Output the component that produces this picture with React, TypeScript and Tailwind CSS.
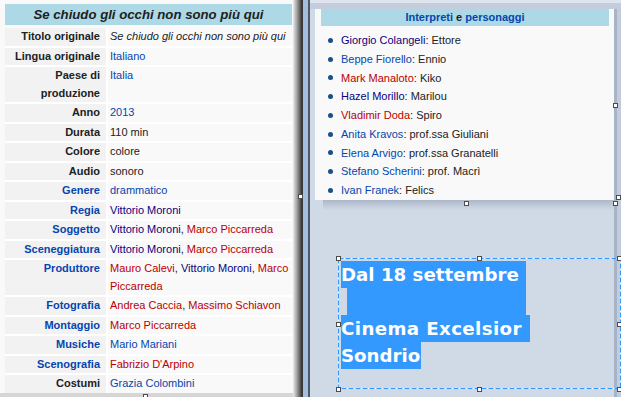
type Tone = "k" | "b" | "v" | "r";

type Part = { t: string; c?: Tone; i?: boolean };

type Row = { label: string[]; link?: boolean; lines: Part[][] };

const toneClass: Record<Tone, string> = {
  k: "text-[#202122]",
  b: "text-[#0645ad]",
  v: "text-[#0b0080]",
  r: "text-[#ba0000]",
};

const VM: Part = { t: "Vittorio Moroni", c: "v" };
const MP: Part = { t: "Marco Piccarreda", c: "r" };
const comma: Part = { t: ", " };

const rows: Row[] = [
  { label: ["Titolo originale"], lines: [[{ t: "Se chiudo gli occhi non sono più qui", i: true }]] },
  { label: ["Lingua originale"], lines: [[{ t: "Italiano", c: "b" }]] },
  { label: ["Paese di", "produzione"], lines: [[{ t: "Italia", c: "b" }]] },
  { label: ["Anno"], lines: [[{ t: "2013", c: "b" }]] },
  { label: ["Durata"], lines: [[{ t: "110 min" }]] },
  { label: ["Colore"], lines: [[{ t: "colore" }]] },
  { label: ["Audio"], lines: [[{ t: "sonoro" }]] },
  { label: ["Genere"], link: true, lines: [[{ t: "drammatico", c: "b" }]] },
  { label: ["Regia"], link: true, lines: [[VM]] },
  { label: ["Soggetto"], link: true, lines: [[VM, comma, MP]] },
  { label: ["Sceneggiatura"], link: true, lines: [[VM, comma, MP]] },
  {
    label: ["Produttore"],
    link: true,
    lines: [
      [{ t: "Mauro Calevi", c: "r" }, comma, VM, comma, { t: "Marco", c: "r" }],
      [{ t: "Piccarreda", c: "r" }],
    ],
  },
  { label: ["Fotografia"], link: true, lines: [[{ t: "Andrea Caccia", c: "r" }, comma, { t: "Massimo Schiavon", c: "r" }]] },
  { label: ["Montaggio"], link: true, lines: [[MP]] },
  { label: ["Musiche"], link: true, lines: [[{ t: "Mario Mariani", c: "b" }]] },
  { label: ["Scenografia"], link: true, lines: [[{ t: "Fabrizio D'Arpino", c: "r" }]] },
  { label: ["Costumi"], lines: [[{ t: "Grazia Colombini", c: "b" }]] },
];

const cast: { name: string; c: Tone; role: string }[] = [
  { name: "Giorgio Colangeli", c: "v", role: "Ettore" },
  { name: "Beppe Fiorello", c: "b", role: "Ennio" },
  { name: "Mark Manaloto", c: "r", role: "Kiko" },
  { name: "Hazel Morillo", c: "v", role: "Marilou" },
  { name: "Vladimir Doda", c: "r", role: "Spiro" },
  { name: "Anita Kravos", c: "b", role: "prof.ssa Giuliani" },
  { name: "Elena Arvigo", c: "b", role: "prof.ssa Granatelli" },
  { name: "Stefano Scherini", c: "b", role: "prof. Macrì" },
  { name: "Ivan Franek", c: "b", role: "Felics" },
];

function Parts({ parts }: { parts: Part[] }) {
  return (
    <>
      {parts.map((p, i) => (
        <span key={i} className={`${toneClass[p.c ?? "k"]} ${p.i ? "italic" : ""}`}>
          {p.t}
        </span>
      ))}
    </>
  );
}

function InfoboxPane() {
  return (
    <div className="flex w-[293px] shrink-0 flex-col">
      <div className="h-[393px] bg-[#f9f9f9] pl-[5px] pt-[4px]">
        <div className="flex h-[21px] w-[287px] items-center justify-center bg-[#add8e6] text-[13.2px] font-bold italic">
          Se chiudo gli occhi non sono più qui
        </div>
        <div className="mt-[3px] grid w-[287px] grid-cols-[101px_184px] gap-[2px] bg-white leading-[17.5px]">
          {rows.map((row) => (
            <div key={row.label.join(" ")} className="contents">
              <div
                className={`bg-[#f2f2f2] pr-[6px] text-right font-bold ${row.link ? "text-[#0645ad]" : "text-[#202122]"}`}
              >
                {row.label.map((l) => (
                  <div key={l}>{l}</div>
                ))}
              </div>
              <div className="bg-[#f9f9f9] pl-[2px]">
                {row.lines.map((line, i) => (
                  <div key={i}>
                    <Parts parts={line} />
                  </div>
                ))}
              </div>
            </div>
          ))}
        </div>
      </div>
      <div className="h-[4px] bg-[#d6d6d6]" />
    </div>
  );
}

function Divider() {
  return (
    <div className="flex shrink-0">
      <div className="w-[8px] bg-gradient-to-r from-[#ececec] via-[#a0a0a0] to-[#4c4c4c]" />
      <div className="w-[2px] bg-[#3a3a3a]" />
      <div className="w-[5px] bg-[#a4bfdd]" />
      <div className="w-[2px] bg-[#4f5868]" />
    </div>
  );
}

function Handle({ className }: { className: string }) {
  return <div className={`absolute h-[5px] w-[5px] border border-[#4c4c4c] bg-white ${className}`} />;
}

function TextBox() {
  return (
    <div className="relative ml-[28px] mt-[48px] h-[131px] w-[283px]">
      <svg className="absolute inset-0" width="283" height="131">
        <rect x="0.5" y="0.5" width="282" height="130" fill="none" stroke="#ffffff" />
        <rect x="0.5" y="0.5" width="282" height="130" fill="none" stroke="#3399ff" strokeDasharray="5 2" />
      </svg>
      <div className="relative pl-[3px] pt-[3px] font-['DejaVu_Sans',Verdana,sans-serif] text-[18.2px] font-bold leading-[27px] text-white">
        <div className="w-fit bg-[#3399ff] pr-[1px]">Dal 18 settembre&nbsp;</div>
        <div className="ml-[6px] h-[27px] w-[179px] bg-[#3399ff]" />
        <div className="w-fit bg-[#3399ff] pr-[1px] tracking-[0.4px]">Cinema Excelsior&nbsp;</div>
        <div className="w-fit bg-[#3399ff] pr-[1px]">Sondrio</div>
      </div>
      <Handle className="-left-[2px] -top-[2px]" />
      <Handle className="left-[139px] -top-[2px]" />
      <Handle className="left-[279px] -top-[2px]" />
      <Handle className="-left-[2px] top-[64px]" />
      <Handle className="left-[279px] top-[64px]" />
      <Handle className="-left-[2px] top-[129px]" />
      <Handle className="left-[139px] top-[129px]" />
      <Handle className="left-[279px] top-[129px]" />
    </div>
  );
}

function SlidePane() {
  return (
    <div className="flex flex-1 flex-col bg-[linear-gradient(to_right,#d0d9e6_304px,#a7b3c6_304px,#a7b3c6_307px,#c3ccda_307px)]">
      <div className="h-[9px] border-t-[3px] border-[#dfe5ee] bg-[#c4cddb]" />
      <div className="pl-[5px]">
        <div className="h-[191px] w-[299px] bg-[#f9f9f9] pl-[6px] pr-[5px]">
          <div className="h-[17px] bg-[#add8e6] text-center font-bold leading-[17px]">
            <span className="text-[#0645ad]">Interpreti</span> e{" "}
            <span className="text-[#0645ad]">personaggi</span>
          </div>
          <ul className="mt-[5px] pl-[7px]">
            {cast.map((m) => (
              <li key={m.name} className="flex h-[18.75px] items-center">
                <span className="mr-[8px] h-[5px] w-[5px] rounded-full bg-[#1b4f86]" />
                <span className={toneClass[m.c]}>{m.name}</span>
                <span>:&nbsp;{m.role}</span>
              </li>
            ))}
          </ul>
        </div>
      </div>
      <div className="ml-[13px] h-[10px] w-[291px] bg-gradient-to-b from-[#acb8c9] to-[#d0d9e6]" />
      <TextBox />
    </div>
  );
}

export default function App() {
  return (
    <div className="relative flex h-[397px] w-[621px] overflow-hidden font-['Liberation_Sans',Arial,sans-serif] text-[11px] text-[#202122]">
      <InfoboxPane />
      <Divider />
      <SlidePane />
      <Handle className="left-[298px] top-[194px]" />
      <Handle className="left-[464px] top-[201px]" />
      <Handle className="left-[613px] top-[103px]" />
      <Handle className="left-[616px] top-[195px]" />
      <Handle className="left-[613px] top-[201px]" />
      <Handle className="left-[143px] top-[394px]" />
    </div>
  );
}
